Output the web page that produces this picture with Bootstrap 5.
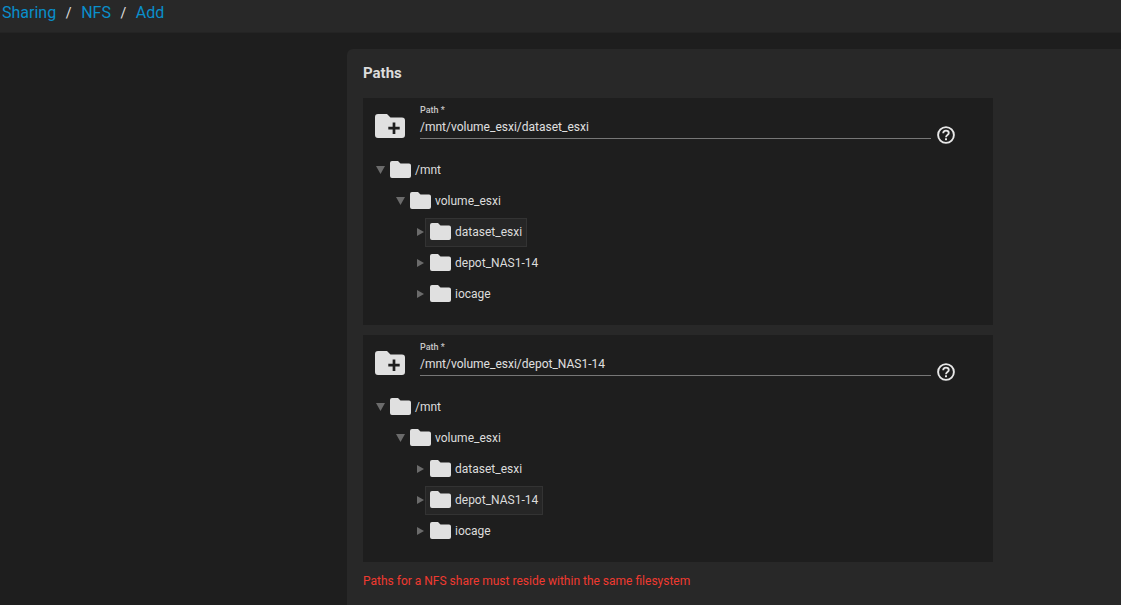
<!DOCTYPE html>
<html lang="en">
<head>
<meta charset="utf-8">
<title>Sharing / NFS / Add</title>
<link href="https://cdn.jsdelivr.net/npm/bootstrap@5.3.0/dist/css/bootstrap.min.css" rel="stylesheet">
<style>
html,body{height:100%;overflow:hidden}
body{background:#1e1e1e;color:#e0e0e0;font-family:Roboto,"Liberation Sans",sans-serif;font-size:13px}
.topbar{height:33px;background:#282828;border-bottom:1px solid #242424;padding-left:2px;font-size:16px;line-height:26px}
.topbar a{color:#0a8fcb;text-decoration:none}
.topbar .sep{color:#e0e0e0;margin:0 9.6px;font-size:14px}
.outer{padding:16px 0 0 347px}
.panel-p{background:#282828;border-radius:6px 0 0 0;padding:16px;height:556px}
.panel-title{font-size:15px;font-weight:700;line-height:16px;margin:0 0 17px;color:#dcdcdc}
.pbox{width:630px;background:#1e1e1e;padding:0 12px 16px;margin-bottom:10px}
.phead{height:56px;gap:15px}
.addicon{width:30px;height:24px;margin-top:16px;flex:none}
.pfield{width:511px;flex:none;padding-top:7px}
.plabel{font-size:9px;line-height:10px;color:#c8c8c8;font-weight:500;height:13px}
.pvalue{font-size:12px;line-height:18px;height:21px;border-bottom:1px solid #777;color:#e0e0e0;white-space:nowrap}
.helpic{width:18px;height:18px;margin:28px 0 0 -9px;flex:none}
.trow{height:31px;font-size:12px;color:#dcdcdc}
.lv1{margin-left:20px}
.lv2{margin-left:40px}
.tw{width:15px;flex:none;display:flex;padding-left:1px}
.arr{margin-left:1px}
.fold{width:21px;height:17px;flex:none;margin-right:4px}
.tnode{display:flex;align-items:center}
.act{background:#262626;outline:1px solid #333;margin:2px 0 0 -4px;padding:0 4px 2px;height:27px}
.errline{color:#f03a30;font-size:12px;line-height:14px;margin-top:12px}
</style>
</head>
<body>
<svg width="0" height="0" class="position-absolute">
<defs>
<symbol id="fo" viewBox="0 0 21 17"><path d="M2 0h6l2.5 2.6H19a2 2 0 0 1 2 2V15a2 2 0 0 1-2 2H2a2 2 0 0 1-2-2V2a2 2 0 0 1 2-2z" fill="#e0e0e0"/></symbol>
<symbol id="foadd" viewBox="0 0 30 24"><path d="M3 0h9l3.5 3.5H27a3 3 0 0 1 3 3V21a3 3 0 0 1-3 3H3a3 3 0 0 1-3-3V3a3 3 0 0 1 3-3z" fill="#e0e0e0"/><path d="M19 8.5v11.5M13.3 14.2h11.4" stroke="#1e1e1e" stroke-width="2.7" fill="none"/></symbol>
<symbol id="hp" viewBox="0 0 18 18"><circle cx="9" cy="9" r="7.9" fill="none" stroke="#e8e8e8" stroke-width="1.9"/><path d="M6.2 7.2c0-1.6 1.2-2.6 2.8-2.6s2.8 1 2.8 2.4c0 2-2.8 2-2.8 4.2" fill="none" stroke="#e8e8e8" stroke-width="1.8"/><rect x="8" y="12.3" width="2" height="1.9" fill="#e8e8e8"/></symbol>
<symbol id="dn" viewBox="0 0 9 8"><path d="M0 0h9L4.5 8z" fill="#6b6b6b"/></symbol>
<symbol id="rt" viewBox="0 0 7 8"><path d="M0 0l7 4-7 4z" fill="#6b6b6b"/></symbol>
</defs>
</svg>

<nav class="topbar d-flex align-items-start">
<a href="#">Sharing</a><span class="sep">/</span><a href="#">NFS</a><span class="sep">/</span><a href="#">Add</a>
</nav>

<main class="outer">
<section class="panel-p">
<h2 class="panel-title">Paths</h2>

<div class="pbox">
<div class="phead d-flex">
<svg class="addicon"><use href="#foadd"/></svg>
<div class="pfield"><div class="plabel">Path *</div><div class="pvalue">/mnt/volume_esxi/dataset_esxi</div></div>
<svg class="helpic"><use href="#hp"/></svg>
</div>
<div class="trow d-flex align-items-center"><span class="tw"><svg width="9" height="8"><use href="#dn"/></svg></span><svg class="fold"><use href="#fo"/></svg><span>/mnt</span></div>
<div class="trow lv1 d-flex align-items-center"><span class="tw"><svg width="9" height="8"><use href="#dn"/></svg></span><svg class="fold"><use href="#fo"/></svg><span>volume_esxi</span></div>
<div class="trow lv2 d-flex align-items-center"><span class="tw"><svg width="7" height="8" class="arr"><use href="#rt"/></svg></span><span class="tnode act"><svg class="fold"><use href="#fo"/></svg><span>dataset_esxi</span></span></div>
<div class="trow lv2 d-flex align-items-center"><span class="tw"><svg width="7" height="8" class="arr"><use href="#rt"/></svg></span><svg class="fold"><use href="#fo"/></svg><span>depot_NAS1-14</span></div>
<div class="trow lv2 d-flex align-items-center"><span class="tw"><svg width="7" height="8" class="arr"><use href="#rt"/></svg></span><svg class="fold"><use href="#fo"/></svg><span>iocage</span></div>
</div>

<div class="pbox mb-0">
<div class="phead d-flex">
<svg class="addicon"><use href="#foadd"/></svg>
<div class="pfield"><div class="plabel">Path *</div><div class="pvalue">/mnt/volume_esxi/depot_NAS1-14</div></div>
<svg class="helpic"><use href="#hp"/></svg>
</div>
<div class="trow d-flex align-items-center"><span class="tw"><svg width="9" height="8"><use href="#dn"/></svg></span><svg class="fold"><use href="#fo"/></svg><span>/mnt</span></div>
<div class="trow lv1 d-flex align-items-center"><span class="tw"><svg width="9" height="8"><use href="#dn"/></svg></span><svg class="fold"><use href="#fo"/></svg><span>volume_esxi</span></div>
<div class="trow lv2 d-flex align-items-center"><span class="tw"><svg width="7" height="8" class="arr"><use href="#rt"/></svg></span><svg class="fold"><use href="#fo"/></svg><span>dataset_esxi</span></div>
<div class="trow lv2 d-flex align-items-center"><span class="tw"><svg width="7" height="8" class="arr"><use href="#rt"/></svg></span><span class="tnode act"><svg class="fold"><use href="#fo"/></svg><span>depot_NAS1-14</span></span></div>
<div class="trow lv2 d-flex align-items-center"><span class="tw"><svg width="7" height="8" class="arr"><use href="#rt"/></svg></span><svg class="fold"><use href="#fo"/></svg><span>iocage</span></div>
</div>

<div class="errline">Paths for a NFS share must reside within the same filesystem</div>
</section>
</main>
</body>
</html>
